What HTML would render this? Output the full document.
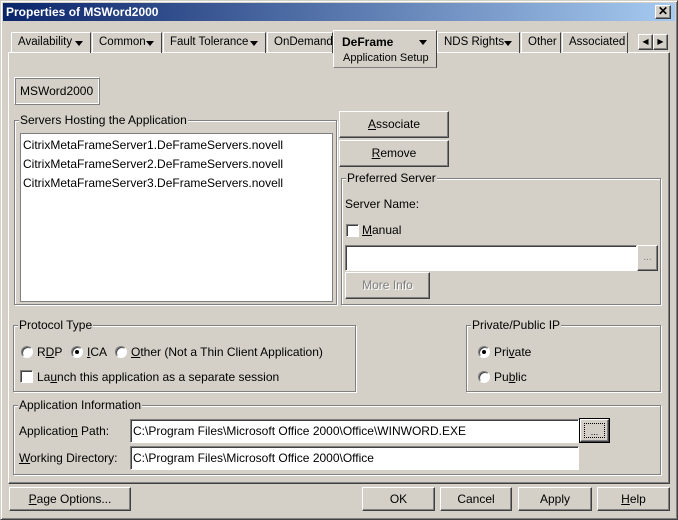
<!DOCTYPE html>
<html><head><style>
*{box-sizing:border-box;margin:0;padding:0}
body{width:678px;height:520px;background:#d4d0c8;font-family:"Liberation Sans",sans-serif;font-size:12px;color:#000;position:relative;overflow:hidden}
.a{position:absolute}
.win{left:0;top:0;width:678px;height:520px;border:1px solid;border-color:#d4d0c8 #404040 #404040 #d4d0c8;box-shadow:inset 1px 1px 0 #fff,inset -1px -1px 0 #808080}
.title{left:3px;top:3px;width:672px;height:18px;background:linear-gradient(90deg,#0a246a,#a6caf0);color:#fff;font-weight:bold;font-size:12px;line-height:18px;padding-left:3px}
.btn{position:absolute;background:#d4d0c8;border:1px solid;border-color:#fff #404040 #404040 #fff;box-shadow:inset -1px -1px 0 #808080;text-align:center;font-size:12px}
.sunk{position:absolute;background:#fff;border:1px solid;border-color:#808080 #fff #fff #808080;box-shadow:inset 1px 1px 0 #404040}
.grp{position:absolute;border:1px solid #808080;box-shadow:1px 1px 0 #fff,inset 1px 1px 0 #fff}
.gl{position:absolute;top:-8px;left:4px;background:#d4d0c8;padding:0 1px;line-height:14px}
.tab{position:absolute;top:32px;height:21px;border:1px solid;border-color:#fff #404040 transparent #fff;border-bottom:none;line-height:18px;padding-left:6px;font-size:11.5px;white-space:nowrap;overflow:hidden}
.arr{position:absolute;right:7px;top:8px;width:0;height:0;border-left:4px solid transparent;border-right:4px solid transparent;border-top:5px solid #000}
.rad{position:absolute;width:12px;height:12px;border-radius:50%;background:#fff;border:1px solid;border-color:#808080 #fff #fff #808080;box-shadow:inset 1px 1px 0 #404040}
.rad.on::after{content:"";position:absolute;left:3px;top:3px;width:4px;height:4px;border-radius:50%;background:#000}
.chk{position:absolute;width:13px;height:13px;background:#fff;border:1px solid;border-color:#808080 #fff #fff #808080;box-shadow:inset 1px 1px 0 #404040}
.t{position:absolute;line-height:14px;white-space:nowrap}
u{text-decoration:underline}
</style></head><body>
<div class="a win"></div>
<div class="a title">Properties of MSWord2000</div>
<div class="btn" style="left:655px;top:5px;width:16px;height:14px;line-height:11px;font-weight:bold;font-size:12px">✕</div>

<div class="a" style="left:8px;top:52px;width:662px;height:432px;border:1px solid;border-color:#fff #404040 #404040 #fff;box-shadow:inset -1px -1px 0 #808080"></div>
<div class="tab" style="left:11px;width:80px">Availability<span class="arr"></span></div>
<div class="tab" style="left:92px;width:70px">Common<span class="arr"></span></div>
<div class="tab" style="left:163px;width:103px">Fault Tolerance<span class="arr"></span></div>
<div class="tab" style="left:267px;width:66px">OnDemand</div>
<div class="tab" style="left:437px;width:83px">NDS Rights<span class="arr"></span></div>
<div class="tab" style="left:521px;width:40px">Other</div>
<div class="tab" style="left:562px;width:66px">Associated (</div>
<div class="a" style="left:333px;top:30px;width:104px;height:38px;background:#d4d0c8;border:1px solid;border-color:#fff #404040 #808080 #fff"></div>
<div class="t" style="left:342px;top:35px;font-weight:bold">DeFrame</div>
<span class="a" style="left:419px;top:40px;width:0;height:0;border-left:4px solid transparent;border-right:4px solid transparent;border-top:5px solid #000"></span>
<div class="t" style="left:343px;top:51px;font-size:11px">Application Setup</div>
<div class="btn" style="left:638px;top:34px;width:15px;height:16px;font-size:8px;line-height:14px">◀</div>
<div class="btn" style="left:653px;top:34px;width:15px;height:16px;font-size:8px;line-height:14px">▶</div>

<div class="a" style="left:14px;top:77px;width:86px;height:28px;border:1px solid;border-color:#fff #808080 #808080 #fff;box-shadow:inset 1px 1px 0 #808080,inset -1px -1px 0 #fff;line-height:26px;padding-left:5px">MSWord2000</div>

<div class="grp" style="left:14px;top:120px;width:323px;height:185px"><span class="gl">Servers Hosting the Application</span></div>
<div class="sunk" style="left:20px;top:133px;width:313px;height:169px;border-color:#808080;box-shadow:none"></div>
<div class="t" style="left:23px;top:138px">CitrixMetaFrameServer1.DeFrameServers.novell</div>
<div class="t" style="left:23px;top:157px">CitrixMetaFrameServer2.DeFrameServers.novell</div>
<div class="t" style="left:23px;top:176px">CitrixMetaFrameServer3.DeFrameServers.novell</div>

<div class="btn" style="left:339px;top:111px;width:110px;height:27px;line-height:25px"><u>A</u>ssociate</div>
<div class="btn" style="left:339px;top:140px;width:110px;height:27px;line-height:25px"><u>R</u>emove</div>

<div class="grp" style="left:341px;top:178px;width:320px;height:127px"><span class="gl">Preferred Server</span></div>
<div class="t" style="left:345px;top:197px">Server Name:</div>
<div class="chk" style="left:346px;top:224px"></div>
<div class="t" style="left:362px;top:223px"><u>M</u>anual</div>
<div class="sunk" style="left:345px;top:245px;width:292px;height:26px"></div>
<div class="btn" style="left:637px;top:245px;width:21px;height:26px;color:#808080;line-height:24px;font-size:10px">...</div>
<div class="btn" style="left:345px;top:272px;width:85px;height:27px;line-height:25px;color:#808080;text-shadow:1px 1px 0 #fff">More Info</div>

<div class="grp" style="left:13px;top:325px;width:343px;height:67px"><span class="gl">Protocol Type</span></div>
<div class="rad" style="left:21px;top:346px"></div><div class="t" style="left:37px;top:345px">R<u>D</u>P</div>
<div class="rad on" style="left:71px;top:346px"></div><div class="t" style="left:87px;top:345px"><u>I</u>CA</div>
<div class="rad" style="left:115px;top:346px"></div><div class="t" style="left:131px;top:345px"><u>O</u>ther (Not a Thin Client Application)</div>
<div class="chk" style="left:20px;top:370px"></div><div class="t" style="left:37px;top:370px">La<u>u</u>nch this application as a separate session</div>

<div class="grp" style="left:466px;top:325px;width:195px;height:67px"><span class="gl">Private/Public IP</span></div>
<div class="rad on" style="left:478px;top:346px"></div><div class="t" style="left:494px;top:345px">Pri<u>v</u>ate</div>
<div class="rad" style="left:478px;top:371px"></div><div class="t" style="left:494px;top:370px">Pu<u>b</u>lic</div>

<div class="grp" style="left:13px;top:405px;width:648px;height:70px"><span class="gl">Application Information</span></div>
<div class="t" style="left:19px;top:424px">Applicatio<u>n</u> Path:</div>
<div class="sunk" style="left:130px;top:419px;width:449px;height:24px"></div>
<div class="t" style="left:133px;top:424px">C:\Program Files\Microsoft Office 2000\Office\WINWORD.EXE</div>
<div class="a" style="left:579px;top:418px;width:31px;height:25px;border:1px solid #000"></div>
<div class="btn" style="left:580px;top:419px;width:29px;height:23px"><div class="a" style="left:3px;top:3px;width:21px;height:15px;border:1px dotted #000;font-size:9px;line-height:17px">...</div></div>
<div class="t" style="left:19px;top:451px"><u>W</u>orking Directory:</div>
<div class="sunk" style="left:130px;top:446px;width:449px;height:24px"></div>
<div class="t" style="left:133px;top:451px">C:\Program Files\Microsoft Office 2000\Office</div>

<div class="btn" style="left:9px;top:487px;width:122px;height:24px;line-height:22px"><u>P</u>age Options...</div>
<div class="btn" style="left:362px;top:487px;width:73px;height:24px;line-height:22px">OK</div>
<div class="btn" style="left:440px;top:487px;width:72px;height:24px;line-height:22px">Cancel</div>
<div class="btn" style="left:518px;top:487px;width:74px;height:24px;line-height:22px">Apply</div>
<div class="btn" style="left:597px;top:487px;width:73px;height:24px;line-height:22px"><u>H</u>elp</div>
</body></html>
